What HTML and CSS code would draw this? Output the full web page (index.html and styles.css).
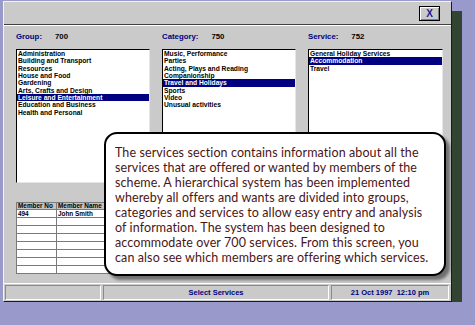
FILE: index.html
```html
<!DOCTYPE html>
<html lang="en">
<head>
    <meta charset="UTF-8">
    <title>Select Services</title>
    <link rel="stylesheet" href="styles.css">
</head>
<body>
    <div class="window">
        <!--title bar-->
        <div class="title-bar">
            <span class="close-btn">X</span>
        </div>

        <div class="window-body">
            <!--three lists-->
            <div class="columns">
                <div class="column">
                    <div class="field-label"><span class="label-name">Group:</span><span class="label-count">700</span></div>
                    <ul class="list-box">
                        <li>Administration</li>
                        <li>Building and Transport</li>
                        <li>Resources</li>
                        <li>House and Food</li>
                        <li>Gardening</li>
                        <li>Arts, Crafts and Design</li>
                        <li class="active">Leisure and Entertainment</li>
                        <li>Education and Business</li>
                        <li>Health and Personal</li>
                    </ul>
                </div>
                <div class="column">
                    <div class="field-label"><span class="label-name">Category:</span><span class="label-count">750</span></div>
                    <ul class="list-box">
                        <li>Music, Performance</li>
                        <li>Parties</li>
                        <li>Acting, Plays and Reading</li>
                        <li>Companionship</li>
                        <li class="active">Travel and Holidays</li>
                        <li>Sports</li>
                        <li>Video</li>
                        <li>Unusual activities</li>
                    </ul>
                </div>
                <div class="column">
                    <div class="field-label"><span class="label-name">Service:</span><span class="label-count">752</span></div>
                    <ul class="list-box">
                        <li>General Holiday Services</li>
                        <li class="active">Accommodation</li>
                        <li>Travel</li>
                    </ul>
                </div>
            </div>

            <!--members table-->
            <table class="member-table">
                <tr><th class="col-no">Member No</th><th>Member Name</th></tr>
                <tr><td>494</td><td>John Smith</td></tr>
                <tr><td></td><td></td></tr>
                <tr><td></td><td></td></tr>
                <tr><td></td><td></td></tr>
                <tr><td></td><td></td></tr>
                <tr><td></td><td></td></tr>
                <tr><td></td><td></td></tr>
                <tr><td></td><td></td></tr>
            </table>
        </div>

        <!--status bar-->
        <div class="status-bar">
            <div class="panel panel-left"></div>
            <div class="panel panel-mid">Select Services</div>
            <div class="panel panel-right">21 Oct 1997&nbsp; 12:10 pm</div>
        </div>

        <!--explanation bubble-->
        <div class="note">
            <p>The services section contains information about all the<br>
            services that are offered or wanted by members of the<br>
            scheme. A hierarchical system has been implemented<br>
            whereby all offers and wants are divided into groups,<br>
            categories and services to allow easy entry and analysis<br>
            of information. The system has been designed to<br>
            accommodate over 700 services. From this screen, you<br>
            can also see which members are offering which services.</p>
        </div>
    </div>
</body>
</html>
```

FILE: styles.css
```css
* {
    margin: 0;
    padding: 0;
    box-sizing: border-box;
}
ul {
    list-style: none;
}
body {
    background: #9999cc;
    font-family: "Liberation Sans", Arial, sans-serif;
}
.window {
    position: relative;
    display: flex;
    flex-direction: column;
    margin: 1px 0 0 3px;
    width: 449px;
    height: 301px;
    background: #cacaca;
    border: 1px solid;
    border-color: #f4f4f4 #1a1a1a #1a1a1a #f4f4f4;
    box-shadow: 10px 10px 0 #334433;
}

.title-bar {
    display: flex;
    justify-content: flex-end;
    align-items: center;
    height: 23px;
    padding-right: 11px;
    border-bottom: 1px solid #404040;
}
.close-btn {
    width: 21px;
    height: 15px;
    border: 1px solid #000;
    box-shadow: inset 1px 1px #fff, inset -1px -1px #808080;
    color: #1a1a9a;
    font-size: 10px;
    font-weight: bold;
    line-height: 13px;
    text-align: center;
}

.window-body {
    flex: 1;
    padding: 6px 0 0 12px;
    border-top: 1px solid #fff;
}
.columns {
    display: grid;
    grid-template-columns: 134px 134px 135px;
    column-gap: 12px;
}
.field-label {
    height: 10px;
    margin-bottom: 7px;
    font-size: 7.8px;
    font-weight: bold;
    line-height: 10px;
}
.label-name {
    color: #000080;
}
.label-count {
    margin-left: 13px;
    color: #000;
}
.list-box {
    height: 134px;
    background: #fff;
    border: 1px solid;
    border-color: #000 #e6e6e6 #e6e6e6 #000;
    font-size: 6.7px;
    font-weight: bold;
    line-height: 7.33px;
}
.list-box li {
    padding-left: 1px;
    white-space: nowrap;
}
.list-box li.active {
    background: #000080;
    color: #fff;
}

.member-table {
    margin-top: 19px;
    width: 134px;
    border-collapse: collapse;
    border: 1px solid #303030;
    background: #fff;
    font-size: 6.4px;
    font-weight: bold;
}
.member-table th,
.member-table td {
    height: 8px;
    padding: 0 1px;
    border: 1px solid #7a7a7a;
    text-align: left;
    white-space: nowrap;
    line-height: 6px;
}
.member-table th {
    height: 7px;
    background: #c4c4c4;
}
.member-table .col-no {
    width: 40px;
}

.status-bar {
    display: flex;
    gap: 2px;
    height: 18px;
    padding: 1px 2px 1px 1px;
    border-top: 1px solid #fff;
}
.panel {
    height: 15px;
    border: 1px solid;
    border-color: #8a8a8a #fff #fff #8a8a8a;
    color: #000080;
    font-size: 7.5px;
    font-weight: bold;
    line-height: 13px;
    text-align: center;
    white-space: nowrap;
}
.panel-left {
    width: 96px;
}
.panel-mid {
    width: 226px;
}
.panel-right {
    flex: 1;
}

.note {
    position: absolute;
    left: 100px;
    top: 130px;
    width: 342px;
    height: 144px;
    padding: 11px 0 0 9px;
    background: #fff;
    border: 2px solid #000;
    border-radius: 13px;
    box-shadow: 4px 4px 3px rgba(0, 0, 0, 0.45);
    color: #4a1515;
    font-family: Lato, sans-serif;
    font-size: 12.5px;
    line-height: 15px;
    letter-spacing: 0.1px;
    white-space: nowrap;
}
```
